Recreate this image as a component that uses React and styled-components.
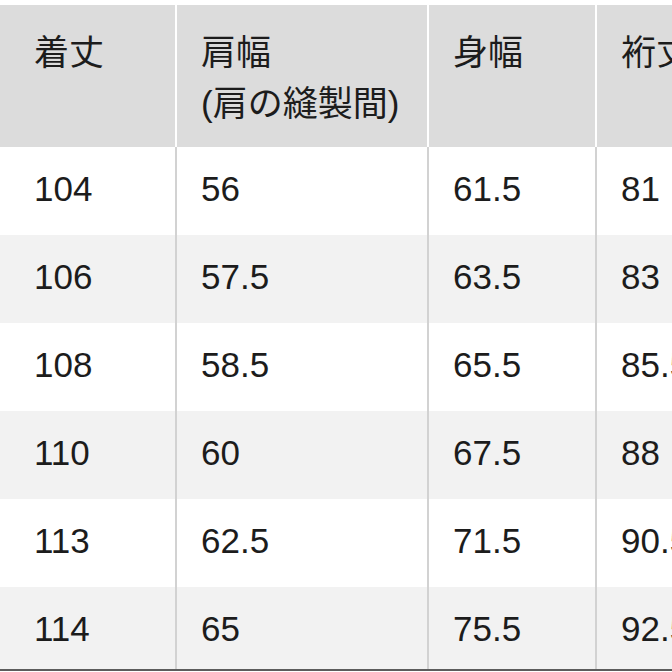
import styled, { createGlobalStyle } from "styled-components";

const GlobalStyle = createGlobalStyle`
  html, body {
    margin: 0;
    padding: 0;
    background: #ffffff;
  }
  body {
    font-family: "Liberation Sans", "Noto Sans CJK JP", sans-serif;
    color: #1c1c1c;
  }
`;

const Page = styled.div`
  width: 672px;
  height: 672px;
  overflow: hidden;
  background: #ffffff;
`;

const Table = styled.div`
  height: 664px;
  padding-top: 5px;
  overflow: hidden;
  border-bottom: 2px solid #5c5c5c;
`;

const columns = "8px 165px 250px 166px 220px";

const HeaderRow = styled.div`
  display: grid;
  grid-template-columns: ${columns};
  column-gap: 2px;
  background: #ffffff;
  height: 142px;
`;

const HeaderCell = styled.div`
  background: #dcdcdc;
  padding: 22px 0 0 24px;
  font-size: 35px;
  line-height: 51px;
  white-space: nowrap;
  overflow: hidden;
`;

const Row = styled.div`
  display: grid;
  grid-template-columns: ${columns};
  column-gap: 2px;
  background: #d2d2d2;
  height: 88px;
`;

const Cell = styled.div`
  background: ${(p) => (p.$shaded ? "#f2f2f2" : "#ffffff")};
  display: flex;
  align-items: center;
  padding: 0 0 4px 24px;
  font-size: 35px;
  white-space: nowrap;
  overflow: hidden;
`;

const headers = ["", "着丈", "肩幅\n(肩の縫製間)", "身幅", "裄丈"];

const rows = [
  ["104", "56", "61.5", "81"],
  ["106", "57.5", "63.5", "83"],
  ["108", "58.5", "65.5", "85.5"],
  ["110", "60", "67.5", "88"],
  ["113", "62.5", "71.5", "90.5"],
  ["114", "65", "75.5", "92.5"],
];

export default function App() {
  return (
    <Page>
      <GlobalStyle />
      <Table>
        <HeaderRow>
          {headers.map((h, i) => (
            <HeaderCell key={i}>
              {h.split("\n").map((line, j) => (
                <div key={j}>{line}</div>
              ))}
            </HeaderCell>
          ))}
        </HeaderRow>
        {rows.map((r, i) => (
          <Row key={i}>
            <Cell $shaded={i % 2 === 1} />
            {r.map((v, j) => (
              <Cell key={j} $shaded={i % 2 === 1}>
                {v}
              </Cell>
            ))}
          </Row>
        ))}
      </Table>
    </Page>
  );
}
